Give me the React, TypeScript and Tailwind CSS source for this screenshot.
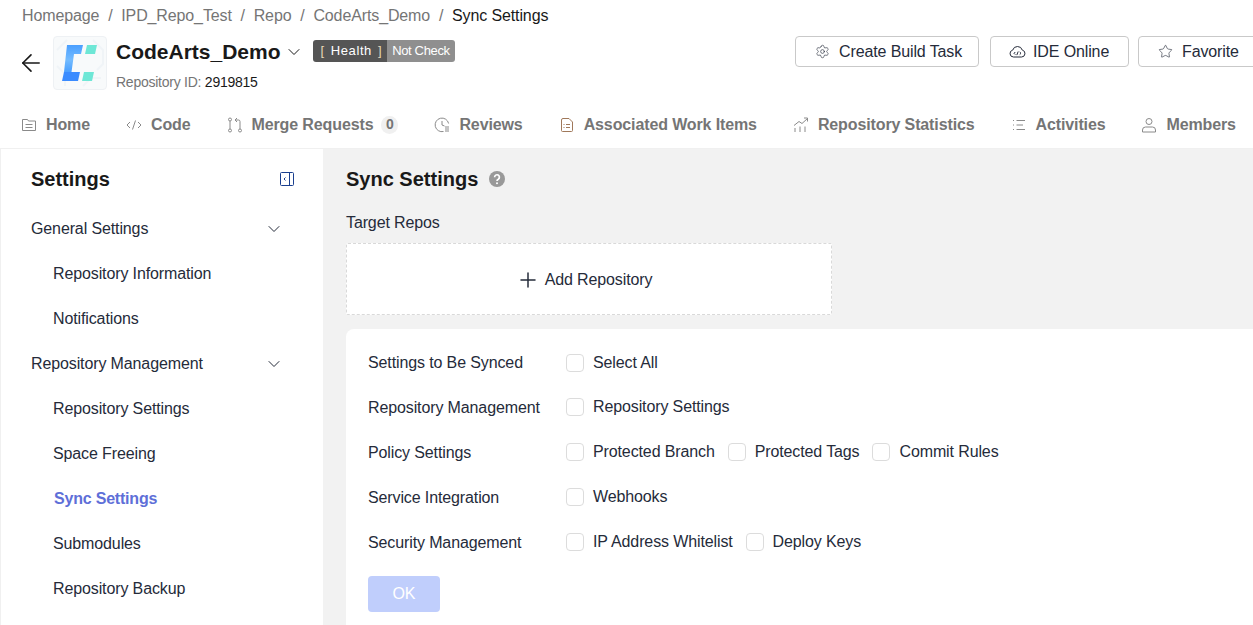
import { ArrowLeft, ChevronDown, Plus, Settings, Star } from 'lucide-react'
import type { ReactNode } from 'react'

const iconProps = { width: 16, height: 16, viewBox: '0 0 16 16', fill: 'none', stroke: 'currentColor', strokeWidth: 1 }

function Logo() {
  return (
    <div className="w-[54px] h-[54px] rounded-[4px] border border-[#eef1f4] bg-[#f8fafb] shrink-0 overflow-hidden">
      <svg width="52" height="52" viewBox="1 1 52 52">
        <defs>
          <linearGradient id="bar" x1="0" y1="0" x2="0" y2="1">
            <stop offset="0" stopColor="#4a9fff" />
            <stop offset="0.55" stopColor="#74bcff" />
            <stop offset="1" stopColor="#4a9fff" />
          </linearGradient>
        </defs>
        <path d="M4 14 14 4M40 4l10 10v14l-6 6M4 30l8 8v12M30 50l8-8h10" fill="none" stroke="#f0f4f7" strokeWidth="2" />
        <path d="M14 9h16l-2 9h-7l-2.500 18H11z" fill="url(#bar)" />
        <path d="M11 36h16l-2 9H9z" fill="#3a8bff" />
        <path d="M34 9h10l-2 9H32z" fill="#6ee7d6" />
        <path d="M31 36h10l-2 9H29z" fill="#6ee7d6" />
      </svg>
    </div>
  )
}

function HomeIcon() {
  return (
    <svg {...iconProps}>
      <path d="M1.500 2.500h5l1 1.500h7v9.500h-13z" />
      <path d="M4.500 7.500h7M4.500 10.500h7" />
    </svg>
  )
}

function CodeIcon() {
  return (
    <svg {...iconProps}>
      <path d="M4 5 1 8l3 3M12 5l3 3-3 3M9.500 3.500l-3 9" />
    </svg>
  )
}

function MergeIcon() {
  return (
    <svg {...iconProps}>
      <circle cx="3" cy="2.500" r="1.500" />
      <circle cx="3" cy="13.500" r="1.500" />
      <circle cx="13" cy="13.500" r="1.500" />
      <path d="M3 4v8M13 12V4.500q0-1.500-1.500-1.500H8.500M10 1 8 3l2 2" />
    </svg>
  )
}

function ReviewIcon() {
  return (
    <svg {...iconProps}>
      <path d="M9.500 14.500A6.800 6.800 0 1 1 14.600 6.500M8 4v4l2.500 1" />
      <path d="M11 10h4M11 12h4M11 14h4" />
    </svg>
  )
}

function WorkIcon() {
  return (
    <svg {...iconProps} stroke="#a0785a">
      <path d="M2.500 3q0-1.500 1.500-1.500h6L13.500 5v8.500q0 1-1 1h-9q-1 0-1-1z" />
      <path d="M7 7.500h4M7 10.500h4M4.500 7.500h1M4.500 10.500h1" />
    </svg>
  )
}

function StatsIcon() {
  return (
    <svg {...iconProps}>
      <path d="M1 8.500 6 4.500l3 2 5.500-5M11 1h3.500v3.500M2 11v4M7 9.500V15M12 9.500V15" />
    </svg>
  )
}

function ListIcon() {
  return (
    <svg {...iconProps}>
      <path d="M5.500 3.500H14M5.500 8H12M5.500 12.500H14M2 3.500h1M2 8h1M2 12.500h1" />
    </svg>
  )
}

function MemberIcon() {
  return (
    <svg {...iconProps}>
      <circle cx="8" cy="4.500" r="3" />
      <path d="M1.500 15v-2q0-3 3-3h7q3 0 3 3v2z" />
    </svg>
  )
}

function CloudCodeIcon() {
  return (
    <svg width="17" height="17" viewBox="0 0 17 17" fill="none" stroke="currentColor" strokeWidth="1">
      <path d="M4.500 14A3.500 3.500 0 0 1 3.700 7.100 5 5 0 0 1 13.300 7.100 3.500 3.500 0 0 1 12.500 14z" />
      <path d="M6.300 9 5 10.300l1.300 1.300M10.700 9 12 10.300l-1.300 1.300M9.200 8.500l-1.400 3.600" />
    </svg>
  )
}

function HelpIcon() {
  return (
    <svg width="16" height="16" viewBox="0 0 16 16" fill="none">
      <circle cx="8" cy="8" r="8" fill="#999999" />
      <path d="M5.600 6.200A2.400 2.400 0 1 1 9.300 8.200Q8 8.900 8 10" stroke="#ffffff" strokeWidth="1.700" />
      <circle cx="8" cy="12.300" r="1" fill="#ffffff" />
    </svg>
  )
}

function CollapseIcon() {
  return (
    <svg width="16" height="16" viewBox="0 0 16 16" fill="none" stroke="#1a3f8f">
      <rect x="1.500" y="1.500" width="13" height="13" rx="1" />
      <path d="M10.500 1.500v13" />
      <path d="M6.500 6.500 5 8l1.500 1.500" />
    </svg>
  )
}

function OutlineButton({ icon, label, className }: { icon: ReactNode; label: string; className: string }) {
  return (
    <button className={`h-[31px] flex items-center border border-[#c9c9c9] rounded-[4px] bg-white text-[16px] text-[#252b3a] whitespace-nowrap shrink-0 ${className}`}>
      {icon}
      {label}
    </button>
  )
}

function Tab({ icon, label, badge }: { icon: ReactNode; label: string; badge?: string }) {
  return (
    <div className="flex items-center gap-[9px] text-[16px] font-bold text-[#757575] whitespace-nowrap shrink-0">
      <span className="text-[#8a8a8a]">{icon}</span>
      {label}
      {badge && (
        <span className="w-[17px] h-[18px] -ml-[1px] rounded-full bg-[#f0f0f0] text-[14px] flex items-center justify-center">{badge}</span>
      )}
    </div>
  )
}

function Check({ label }: { label: string }) {
  return (
    <label className="flex items-center gap-[9px] whitespace-nowrap">
      <span className="w-[18px] h-[18px] rounded-[4px] border border-[#dcdcdc] bg-white" />
      {label}
    </label>
  )
}

const rows = [
  { title: 'Settings to Be Synced', items: ['Select All'] },
  { title: 'Repository Management', items: ['Repository Settings'] },
  { title: 'Policy Settings', items: ['Protected Branch', 'Protected Tags', 'Commit Rules'] },
  { title: 'Service Integration', items: ['Webhooks'] },
  { title: 'Security Management', items: ['IP Address Whitelist', 'Deploy Keys'] },
]

function NavGroup({ label }: { label: string }) {
  return (
    <div className="h-[45px] pl-[30px] pr-[39px] flex items-center justify-between text-[#252b3a]">
      {label}
      <ChevronDown size={20} strokeWidth={1.200} />
    </div>
  )
}

function NavItem({ label, active }: { label: string; active?: boolean }) {
  return (
    <div className={active ? 'h-[45px] pl-[53px] flex items-center font-bold tracking-[-0.2px] text-[#5e6fd8]' : 'h-[45px] pl-[52px] flex items-center text-[#252b3a]'}>
      {label}
    </div>
  )
}

export default function App() {
  return (
    <div className="h-[625px] w-[1253px] overflow-hidden bg-white flex flex-col text-[16px] tracking-[-0.12px] text-[#252b3a] font-['Liberation_Sans',Arial,sans-serif]">
      {/* Header */}
      <header className="h-[149px] shrink-0 border-b border-[#f0f0f0] flex flex-col">
        <div className="h-[31px] pl-[22px] flex items-center gap-[8.800px] text-[#757575]">
          <span>Homepage</span>
          <span>/</span>
          <span>IPD_Repo_Test</span>
          <span>/</span>
          <span>Repo</span>
          <span>/</span>
          <span>CodeArts_Demo</span>
          <span>/</span>
          <span className="text-[#191919]">Sync Settings</span>
        </div>
        <div className="h-[68px] pl-[17px] flex items-start">
          <ArrowLeft size={28} strokeWidth={1.400} className="mt-[18px] mr-[8px] shrink-0 text-[#191919]" />
          <div className="mt-[5px]"><Logo /></div>
          <div className="ml-[9px] mt-[7px] w-[679px] shrink-0">
            <div className="flex items-center">
              <span className="text-[21px] leading-[28px] font-bold tracking-normal text-[#191919]">CodeArts_Demo</span>
              <ChevronDown size={20} strokeWidth={1.200} className="ml-[3px] text-[#191919]" />
              <span className="ml-[9px] -mt-[2px] h-[22px] flex rounded-[3px] overflow-hidden text-[13px] text-white">
                <span className="bg-[#555555] pl-[8px] pr-[5px] flex items-center tracking-[0.6px]"><span className="text-[#e8d9b8] mr-[6px]">[</span>Health<span className="text-[#e8d9b8] ml-[6px]">]</span></span>
                <span className="bg-[#8f8f8f] px-[5px] flex items-center tracking-[-0.35px]">Not Check</span>
              </span>
            </div>
            <div className="mt-[6px] text-[14px] tracking-[-0.25px] text-[#757575]">Repository ID: <span className="text-[#191919]">2919815</span></div>
          </div>
          <div className="mt-[5px] flex">
            <OutlineButton icon={<Settings size={15} strokeWidth={1} />} label="Create Build Task" className="w-[184px] pl-[19px] gap-[9px]" />
            <OutlineButton icon={<CloudCodeIcon />} label="IDE Online" className="w-[139px] ml-[11px] pl-[18px] gap-[7px]" />
            <OutlineButton icon={<Star size={15} strokeWidth={1} />} label="Favorite" className="w-[125px] ml-[9px] pl-[19px] gap-[9px]" />
          </div>
        </div>
        <nav className="flex-1 pl-[21px] pt-[2px] flex items-center gap-[36px]">
          <Tab icon={<HomeIcon />} label="Home" />
          <Tab icon={<CodeIcon />} label="Code" />
          <Tab icon={<MergeIcon />} label="Merge Requests" badge="0" />
          <Tab icon={<ReviewIcon />} label="Reviews" />
          <Tab icon={<WorkIcon />} label="Associated Work Items" />
          <Tab icon={<StatsIcon />} label="Repository Statistics" />
          <Tab icon={<ListIcon />} label="Activities" />
          <Tab icon={<MemberIcon />} label="Members" />
        </nav>
      </header>

      <div className="flex-1 flex min-h-0">
        {/* Sidebar */}
        <aside className="w-[323px] shrink-0 border-l border-[#f0f0f0]">
          <div className="h-[57px] pt-[3px] pl-[30px] pr-[28px] flex items-center justify-between">
            <span className="text-[20px] font-bold tracking-normal text-[#191919]">Settings</span>
            <CollapseIcon />
          </div>
          <NavGroup label="General Settings" />
          <NavItem label="Repository Information" />
          <NavItem label="Notifications" />
          <NavGroup label="Repository Management" />
          <NavItem label="Repository Settings" />
          <NavItem label="Space Freeing" />
          <NavItem label="Sync Settings" active />
          <NavItem label="Submodules" />
          <NavItem label="Repository Backup" />
        </aside>

        {/* Main */}
        <main className="flex-1 min-w-0 bg-[#f2f2f2] pl-[23px]">
          <div className="h-[60px] flex items-center gap-[11px]">
            <span className="text-[20px] font-bold tracking-normal text-[#191919]">Sync Settings</span>
            <HelpIcon />
          </div>
          <div className="h-[27px] flex items-center">Target Repos</div>
          <div className="mt-[7px] w-[486px] h-[72px] border border-dashed border-[#d9d9d9] rounded-[2px] bg-white flex items-center justify-center gap-[5px] pr-[10px] pt-[2px]">
            <Plus size={24} strokeWidth={1.500} />
            Add Repository
          </div>
          <section className="mt-[14px] bg-white rounded-tl-[8px] pl-[22px] pt-[11px] h-[400px]">
            {rows.map((row, i) => (
              <div key={row.title} className="h-[45px] flex items-center">
                <span className="w-[198px] shrink-0">{row.title}</span>
                <div className={i === 0 ? 'flex items-center gap-[13px]' : 'flex items-center gap-[13px] -mt-[2px]'}>
                  {row.items.map(item => <Check key={item} label={item} />)}
                </div>
              </div>
            ))}
            <button className="mt-[11px] w-[72px] h-[36px] rounded-[4px] bg-[#c0cefc] text-white">OK</button>
          </section>
        </main>
      </div>
    </div>
  )
}
